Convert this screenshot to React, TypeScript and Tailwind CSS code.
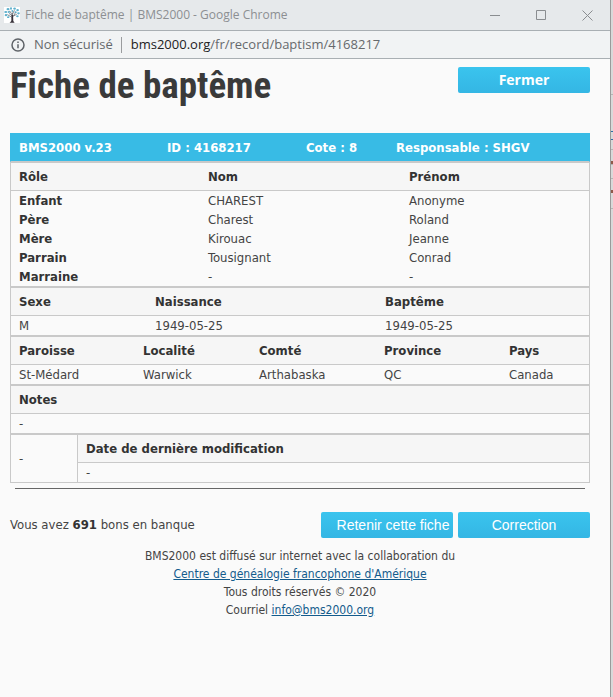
const button =
  "h-[26px] w-[132px] rounded-xs bg-linear-to-b from-[#3ac4ee] to-[#34b6e4] text-center text-white";
const table =
  "w-full table-fixed border-separate border-spacing-0 border border-[#c9c9c9] text-left text-[13px] leading-[19px]";
const th = "h-7 border-b border-[#c9c9c9] bg-[#f6f6f6] p-0 pl-2 font-bold text-[#333]";
const td = "h-[19px] p-0 pl-2";
const windowButton = "flex h-full w-[46px] items-center justify-center";

type SectionProps = { heads: string[]; rows: string[][]; cols: string[]; rowHeads?: boolean };

function Section({ heads, rows, cols, rowHeads }: SectionProps) {
  return (
    <table className={table}>
      <colgroup>
        {cols.map((c, i) => (
          <col key={i} className={c} />
        ))}
      </colgroup>
      <thead>
        <tr>
          {heads.map((h) => (
            <th key={h} scope="col" className={th}>{h}</th>
          ))}
        </tr>
      </thead>
      <tbody>
        {rows.map((r, i) => (
          <tr key={i}>
            {r.map((c, j) =>
              rowHeads && j === 0 ? (
                <th key={j} scope="row" className="h-[19px] p-0 pl-2 font-bold text-[#333]">{c}</th>
              ) : (
                <td key={j} className={td}>{c}</td>
              ),
            )}
          </tr>
        ))}
      </tbody>
    </table>
  );
}

function TreeIcon() {
  return (
    <svg viewBox="0 0 16 16" className="h-4 w-4 bg-white" aria-hidden="true">
      <g fill="#5fb0cc">
        <ellipse cx="1.8" cy="5" rx="1.6" ry="1" /><ellipse cx="4" cy="2.2" rx="1.5" ry="1.1" />
        <ellipse cx="7" cy="1.5" rx="1" ry="1.3" /><ellipse cx="10.6" cy="1.6" rx="1.3" ry="1.2" />
        <ellipse cx="13.6" cy="3.2" rx="1.3" ry="1.1" /><ellipse cx="14.5" cy="6.3" rx="1.3" ry="1.1" />
        <ellipse cx="2" cy="8.2" rx="1.3" ry="1.1" /><ellipse cx="4.2" cy="10.2" rx="1.2" ry=".9" />
        <ellipse cx="13.4" cy="9.2" rx="1.3" ry="1" /><ellipse cx="4.8" cy="5" rx="1.1" ry=".9" />
        <ellipse cx="11.6" cy="5.2" rx="1.1" ry=".9" /><ellipse cx="8.3" cy="4" rx=".9" ry="1" />
      </g>
      <path d="M8.3 12V5.5M8.2 10.5L3.4 7.6M8.4 9.6l4.4-2.4M8.2 8L5.6 3.8M8.5 7.2l1.9-4M8.3 9L5 6.4M9.6 8.8l1.8-3" stroke="#37404a" strokeWidth=".6" fill="none" />
      <path d="M7.6 8h1.5l.2 6 1.3 1.8H5.6L7.3 14z" fill="#37323a" />
    </svg>
  );
}

export default function App() {
  return (
    <div className="flex min-h-screen bg-[#d9d9d9] font-['DejaVu_Sans_Condensed','DejaVu_Sans',sans-serif] text-[13px] text-[#444]">
      <div className="flex min-w-0 grow flex-col border-r border-[#9b9b9b] bg-[#fafafa]">
        <header className="flex h-[31px] items-center border-b border-[#a9afb3] bg-[#e6e9eb] pl-1 font-['Open_Sans',sans-serif] text-xs text-[#8c8f92]">
          <TreeIcon />
          <span className="ml-[5px] grow">Fiche de baptême | BMS2000 - Google Chrome</span>
          <button aria-label="Réduire" className={windowButton}>
            <svg width="11" height="11" stroke="#8a8d90"><path d="M0 5.5h10" /></svg>
          </button>
          <button aria-label="Agrandir" className={windowButton}>
            <svg width="11" height="11" stroke="#8a8d90" fill="none"><path d="M.5.5h9v9h-9z" /></svg>
          </button>
          <button aria-label="Fermer la fenêtre" className={windowButton}>
            <svg width="11" height="11" stroke="#8a8d90"><path d="M.5.5l10 10M10.5.5l-10 10" /></svg>
          </button>
        </header>
        <div className="flex h-7 items-center border-b border-[#a9afb3] bg-[#f1f3f4] pl-[11px] font-['Open_Sans',sans-serif] text-[13px] text-[#66696c]">
          <svg width="14" height="14" fill="none" stroke="#5f6368" strokeWidth="1.5" aria-hidden="true">
            <circle cx="7" cy="7" r="6" /><path d="M7 6.2v4M7 3.4v1.5" />
          </svg>
          <span className="ml-[9px]">Non sécurisé</span>
          <span className="mr-[9px] ml-2 h-4 w-px bg-[#9a9c9e]" />
          <span><span className="text-[#222]">bms2000.org</span>/fr/record/baptism/4168217</span>
        </div>
        <main className="pr-5 pl-2.5">
          <div className="flex h-[74px] items-start justify-between">
            <h1 className="pt-1 font-['Roboto_Condensed','Liberation_Sans_Narrow','Liberation_Sans',sans-serif] text-[37px] leading-[46px] font-bold text-[#3a3a3a]">Fiche de baptême</h1>
            <button className={`${button} mt-2 font-['Open_Sans',sans-serif] text-sm font-bold`}>Fermer</button>
          </div>
          <table className="w-full table-fixed border-separate border-spacing-0 border border-[#38bbe5] border-b-[#c9c9c9] bg-[#38bbe5] text-left text-[13px] leading-[19px] text-white">
            <tbody>
              <tr>
                <th className="h-[27px] w-[148px] p-0 pl-2">BMS2000 v.23</th>
                <th className="w-[139px] p-0 pl-2">ID : 4168217</th>
                <th className="w-[90px] p-0 pl-2">Cote : 8</th>
                <th className="p-0 pl-2">Responsable : SHGV</th>
              </tr>
            </tbody>
          </table>
          <Section
            heads={["Rôle", "Nom", "Prénom"]}
            cols={["w-[189px]", "w-[201px]", ""]}
            rowHeads
            rows={[
              ["Enfant", "CHAREST", "Anonyme"],
              ["Père", "Charest", "Roland"],
              ["Mère", "Kirouac", "Jeanne"],
              ["Parrain", "Tousignant", "Conrad"],
              ["Marraine", "-", "-"],
            ]}
          />
          <Section heads={["Sexe", "Naissance", "Baptême"]} cols={["w-[136px]", "w-[230px]", ""]} rows={[["M", "1949-05-25", "1949-05-25"]]} />
          <Section
            heads={["Paroisse", "Localité", "Comté", "Province", "Pays"]}
            cols={["w-[124px]", "w-[116px]", "w-[125px]", "w-[125px]", ""]}
            rows={[["St-Médard", "Warwick", "Arthabaska", "QC", "Canada"]]}
          />
          <Section heads={["Notes"]} cols={[""]} rows={[["-"]]} />
          <table className={table}>
            <tbody>
              <tr>
                <td rowSpan={2} className="w-[67px] border-r border-[#c9c9c9] p-0 pl-2">-</td>
                <th className={th}>Date de dernière modification</th>
              </tr>
              <tr>
                <td className={td}>-</td>
              </tr>
            </tbody>
          </table>
          <hr className="mx-[5px] mt-[5px] border-[#666]" />
          <div className="mt-[23px] flex items-center gap-[5px]">
            <p className="grow">Vous avez <b className="text-[#333]">691</b> bons en banque</p>
            <button className={`${button} pl-3 font-['Liberation_Sans',sans-serif] text-sm`}>Retenir cette fiche</button>
            <button className={`${button} font-['Liberation_Sans',sans-serif] text-sm`}>Correction</button>
          </div>
          <footer className="mt-[9px] text-center text-xs leading-[18px]">
            <p>BMS2000 est diffusé sur internet avec la collaboration du</p>
            <p><a href="#centre" className="text-[#135b8c] underline">Centre de généalogie francophone d'Amérique</a></p>
            <p>Tous droits réservés © 2020</p>
            <p>Courriel <a href="#courriel" className="text-[#135b8c] underline">info@bms2000.org</a></p>
          </footer>
        </main>
      </div>
      <aside className="w-0.5 shrink-0 pt-[94px]" aria-hidden="true">
        <div className="h-[37px] border-t border-[#b5b5b5]" />
        <div className="h-[9px] border-y border-[#2f6ea3]" />
        <div className="h-[10px] border-b border-[#b5b5b5]" />
        <div className="mt-[11px] h-[3px] bg-[#8f5a4a]" />
        <div className="h-[15px] border-y border-[#b5b5b5]" />
        <div className="mt-[11px] h-[3px] bg-[#8f5a4a]" />
        <div className="h-4 border-b border-[#b5b5b5]" />
      </aside>
    </div>
  );
}
